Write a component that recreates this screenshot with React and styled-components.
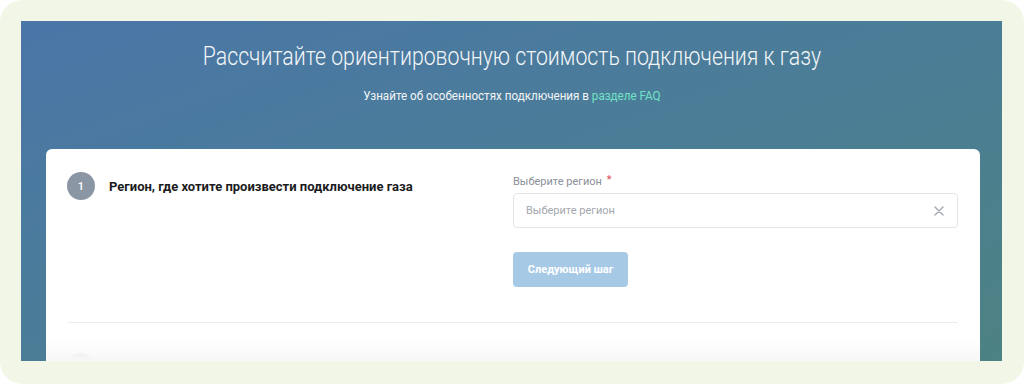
import React from 'react'
import styled, { createGlobalStyle } from 'styled-components'

const GlobalStyle = createGlobalStyle`
  html, body {
    margin: 0;
    padding: 0;
    background: #ffffff;
  }

  body {
    font-family: Roboto, 'Liberation Sans', sans-serif;
  }
`

const Frame = styled.div`
  width: 1024px;
  height: 384px;
  box-sizing: border-box;
  padding: 21px 22px 23px 21px;
  background: #f2f6e7;
  border-radius: 22px;
  overflow: hidden;
`

const Viewport = styled.div`
  display: flex;
  flex-direction: column;
  height: 340px;
  overflow: hidden;
  background: linear-gradient(160deg, #4a76a8 0%, #4b7e95 55%, #4d8283 100%);
`

const Hero = styled.header`
  display: flex;
  flex-direction: column;
  align-items: center;
  flex: none;
  padding-top: 20px;
  height: 128px;
  box-sizing: border-box;
`

/* no condensed face installed, so squeeze Roboto to the condensed width */
const Title = styled.h1`
  margin: 0;
  font-family: Roboto, sans-serif;
  font-weight: 300;
  font-size: 26px;
  line-height: 30px;
  color: #f3f6f8;
  white-space: nowrap;
  transform: scaleX(0.818);
`

const Subtitle = styled.p`
  margin: 17px 0 0;
  font-family: Roboto, sans-serif;
  font-size: 12.5px;
  line-height: 16px;
  color: #f3f6f8;
  white-space: nowrap;
  transform: scaleX(0.93);
`

const FaqLink = styled.a`
  color: #72e3c6;
  text-decoration: none;
`

const Card = styled.section`
  position: relative;
  flex: 1;
  overflow: hidden;
  margin: 0 22px 0 25px;
  padding: 0 22px;
  background: #ffffff;
  border-radius: 6px 6px 0 0;

  &::after {
    content: '';
    position: absolute;
    left: 0;
    right: 0;
    bottom: 0;
    height: 22px;
    background: linear-gradient(to bottom, rgba(255, 255, 255, 0), #f7f7f7);
  }
`

const StepRow = styled.div`
  display: grid;
  grid-template-columns: 1fr 1fr;
  padding: 23px 0 35px;
  border-bottom: 1px solid #ececec;
  opacity: ${p => (p.$faded ? 0.2 : 1)};

  & + & {
    padding-top: 30px;
  }
`

const StepHead = styled.div`
  display: flex;
  align-items: center;
  gap: 14px;
  align-self: start;
`

const StepNumber = styled.span`
  display: flex;
  align-items: center;
  justify-content: center;
  width: 28px;
  height: 28px;
  margin-left: -1px;
  border-radius: 50%;
  background: #8b96a5;
  color: #ffffff;
  font-size: 11px;
  font-weight: 500;
`

const StepTitle = styled.h2`
  margin: 0;
  font-size: 13px;
  font-weight: 700;
  color: #1b1c1e;
`

const Field = styled.div`
  display: flex;
  flex-direction: column;
`

const Label = styled.label`
  font-size: 11px;
  line-height: 14px;
  color: #8b9099;
  margin-top: 1px;

  &::after {
    content: '*';
    color: #e5484d;
    margin-left: 5px;
    font-size: 11px;
    vertical-align: 2px;
  }
`

const SelectBox = styled.div`
  display: flex;
  align-items: center;
  justify-content: space-between;
  height: 35px;
  margin-top: 4px;
  padding: 0 13px 0 12px;
  border: 1px solid #e1e4e8;
  border-radius: 4px;
  box-sizing: border-box;
`

const Placeholder = styled.span`
  font-size: 11px;
  color: #a3a7ae;
`

const ClearIcon = styled.svg`
  width: 10px;
  height: 10px;
  stroke: #a5acb6;
  stroke-width: 1.5;
`

const NextButton = styled.button`
  align-self: flex-start;
  margin-top: 24px;
  width: 115px;
  height: 35px;
  border: none;
  border-radius: 4px;
  background: #a6c9e5;
  color: #ffffff;
  font-family: Roboto, sans-serif;
  font-size: 11px;
  font-weight: 700;
  cursor: not-allowed;
`

const Step = ({ num, title, faded, children }) => (
  <StepRow $faded={faded}>
    <StepHead>
      <StepNumber>{num}</StepNumber>
      <StepTitle>{title}</StepTitle>
    </StepHead>
    {children}
  </StepRow>
)

export default function App() {
  return (
    <>
      <GlobalStyle />
      <Frame>
        <Viewport>
          <Hero>
            <Title>Рассчитайте ориентировочную стоимость подключения к газу</Title>
            <Subtitle>
              Узнайте об особенностях подключения в <FaqLink href="#faq">разделе FAQ</FaqLink>
            </Subtitle>
          </Hero>
          <Card>
            <Step num="1" title="Регион, где хотите произвести подключение газа">
              <Field>
                <Label>Выберите регион</Label>
                <SelectBox>
                  <Placeholder>Выберите регион</Placeholder>
                  <ClearIcon viewBox="0 0 10 10" fill="none">
                    <path d="M1 1l8 8M9 1l-8 8" strokeLinecap="round" />
                  </ClearIcon>
                </SelectBox>
                <NextButton disabled>Следующий шаг</NextButton>
              </Field>
            </Step>
            <Step num="2" title="Параметры подключаемого объекта" faded />
          </Card>
        </Viewport>
      </Frame>
    </>
  )
}
